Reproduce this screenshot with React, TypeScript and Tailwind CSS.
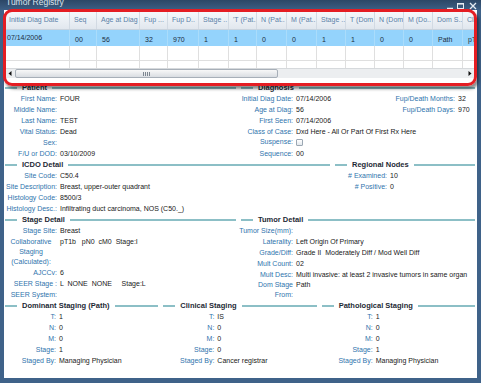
import React from "react";

type Kids = { children?: React.ReactNode };

function Label({ w = "w-[52px]", children }: { w?: string } & Kids) {
  return (
    <div className={`${w} shrink-0 flex justify-end whitespace-nowrap text-[#2f74ad]`}>
      {children}
    </div>
  );
}

function Row({ label, w = "w-[52px]", children }: { label: string; w?: string } & Kids) {
  return (
    <div className="flex h-[11px] leading-[11px]">
      <Label w={w}>{label}</Label>
      <div className="pl-[3px] whitespace-pre text-[#202020]">{children}</div>
    </div>
  );
}

function Head({ title, lead = "w-[12px]" }: { title: string; lead?: string }) {
  return (
    <div className="flex items-center h-[11px]">
      <div className={`${lead} h-[2px] bg-[#8cbfc6] shrink-0`} />
      <div className="px-[5px] font-bold text-[7.5px] leading-[11px] text-[#1d2935] whitespace-nowrap">
        {title}
      </div>
      <div className="flex-1 h-[2px] bg-[#8cbfc6]" />
    </div>
  );
}

const headers = [
  "Initial Diag Date",
  "Seq",
  "Age at Diag",
  "Fup ...",
  "Fup D..",
  "Stage ..",
  "'T (Pat..",
  "N (Pat..",
  "M (Pat..",
  "Stage ..",
  "T (Dom",
  "N (Dom",
  "M (Do..",
  "Dom S..",
  "Clin...",
];
const values = ["07/14/2006", "00", "56", "32", "970", "1", "1", "0", "0", "1", "1", "0", "0", "Path", "pT1b"];

const cols =
  "grid grid-cols-[65px_27px_43px_28px_31px_30px_28px_30px_30px_29px_29px_29px_29px_30px_40px] w-[498px]";

function Staging({ title, t, n, m, stage, by }: { title: string; t: string; n: string; m: string; stage: string; by: string }) {
  return (
    <div>
      <Head title={title} />
      <Row label="T:" w="w-[51px]">{t}</Row>
      <Row label="N:" w="w-[51px]">{n}</Row>
      <Row label="M:" w="w-[51px]">{m}</Row>
      <Row label="Stage:" w="w-[51px]">{stage}</Row>
      <Row label="Staged By:" w="w-[51px]">{by}</Row>
    </div>
  );
}

export default function App() {
  return (
    <div className="relative w-[481px] h-[383px] overflow-hidden bg-[#3f6289] font-['Liberation_Sans',Arial,sans-serif] text-[7px]">
      {/* title bar */}
      <div className="h-[10px] flex items-start justify-between pl-[6px] pr-[4px] overflow-hidden bg-gradient-to-b from-[#2c4766] to-[#3d5f85]">
        <span className="text-[8.5px] leading-[8.5px] -mt-[2px] text-[#dce5ee]">Tumor Registry</span>
        <svg width="32" height="10" viewBox="0 0 32 10" className="shrink-0">
          <path d="M2 8.5H8" stroke="#e6ecf2" strokeWidth="1.5" />
          <rect x="12.5" y="3.5" width="6" height="5" fill="none" stroke="#e6ecf2" strokeWidth="1" />
          <path d="M12.5 3.8H18.5" stroke="#e6ecf2" strokeWidth="1.6" />
          <path d="M25 3L31 9M31 3L25 9" stroke="#e6ecf2" strokeWidth="1.3" />
        </svg>
      </div>

      {/* client area */}
      <div className="mx-[4px] h-[368px] bg-white flex flex-col">
        {/* grid */}
        <div className="ml-[1px] w-[470px] pt-[2px] overflow-hidden">
          <div className={`${cols} h-[18px] bg-gradient-to-b from-[#f5f8fb] to-[#e1e7ee] border-b border-[#c9d3dd]`}>
            {headers.map((h, i) => (
              <div
                key={i}
                className="flex items-center pl-[4px] border-r border-[#d2dae3] text-[#5a80a7] whitespace-nowrap overflow-hidden"
              >
                {h}
              </div>
            ))}
          </div>
          <div className={`${cols} h-[16px] bg-[#94d3fc]`}>
            {values.map((v, i) => (
              <div
                key={i}
                className={
                  i === 0
                    ? "pl-[2px] pt-[2px] leading-[11px] border-r border-[#aadcfb] text-[#1b2c40] whitespace-nowrap overflow-hidden"
                    : "pl-[5px] pt-[4px] leading-[11px] border-r border-[#aadcfb] text-[#1b2c40] whitespace-nowrap overflow-hidden"
                }
              >
                {v}
              </div>
            ))}
          </div>
          <div className={`${cols} h-[15px]`}>
            {headers.map((_, i) => (
              <div key={i} className="border-r border-b border-[#dfdfdf]" />
            ))}
          </div>
          <div className={`${cols} h-[7px]`}>
            {headers.map((_, i) => (
              <div key={i} className="border-r border-[#dfdfdf]" />
            ))}
          </div>
          {/* horizontal scrollbar */}
          <div className="flex h-[10px] bg-[#eceef0] border-t border-[#d6d9dc]">
            <div className="w-[10px] flex items-center justify-center">
              <svg width="4" height="5" viewBox="0 0 4 5">
                <path d="M3.5 0L0.5 2.5L3.5 5Z" fill="#111" />
              </svg>
            </div>
            <div className="w-[263px] rounded-[2px] border border-[#a7afb8] bg-gradient-to-b from-[#f8f8f8] to-[#d9dde2] flex items-center justify-center gap-[1px]">
              <div className="w-[1px] h-[4px] bg-[#7d8690]" />
              <div className="w-[1px] h-[4px] bg-[#7d8690]" />
              <div className="w-[1px] h-[4px] bg-[#7d8690]" />
              <div className="w-[1px] h-[4px] bg-[#7d8690]" />
            </div>
            <div className="flex-1" />
            <div className="w-[10px] flex items-center justify-center">
              <svg width="4" height="5" viewBox="0 0 4 5">
                <path d="M0.5 0L3.5 2.5L0.5 5Z" fill="#111" />
              </svg>
            </div>
          </div>
        </div>

        {/* details */}
        <div className="ml-[1px] mr-[2px] mt-[4px] flex flex-col">
          <div className="grid grid-cols-[231px_1fr] gap-x-[5px]">
            <div>
              <Head title="Patient" />
              <Row label="First Name:">FOUR</Row>
              <Row label="Middle Name:" />
              <Row label="Last Name:">TEST</Row>
              <Row label="Vital Status:">Dead</Row>
              <Row label="Sex:" />
              <Row label="F/U or DOD:">03/10/2009</Row>
            </div>
            <div>
              <Head title="Diagnosis" />
              <div className="flex h-[11px] leading-[11px]">
                <Label>Initial Diag Date:</Label>
                <div className="pl-[3px] text-[#202020]">07/14/2006</div>
                <div className="flex-1" />
                <div className="text-[#2f74ad] whitespace-nowrap">Fup/Death Months:</div>
                <div className="w-[20px] pl-[3px] text-[#202020]">32</div>
              </div>
              <div className="flex h-[11px] leading-[11px]">
                <Label>Age at Diag:</Label>
                <div className="pl-[3px] text-[#202020]">56</div>
                <div className="flex-1" />
                <div className="text-[#2f74ad] whitespace-nowrap">Fup/Death Days:</div>
                <div className="w-[20px] pl-[3px] text-[#202020]">970</div>
              </div>
              <Row label="First Seen:">07/14/2006</Row>
              <Row label="Class of Case:">Dxd Here - All Or Part Of First Rx Here</Row>
              <div className="flex h-[11px] items-center">
                <Label>Suspense:</Label>
                <div className="ml-[3px] w-[7px] h-[7px] rounded-[1px] border border-[#9ba7b3] bg-gradient-to-b from-white to-[#e3e8ed]" />
              </div>
              <Row label="Sequence:">00</Row>
            </div>
          </div>

          <div className="grid grid-cols-[325px_1fr] gap-x-[5px]">
            <div>
              <Head title="ICDO Detail" />
              <Row label="Site Code:">C50.4</Row>
              <Row label="Site Description:">Breast, upper-outer quadrant</Row>
              <Row label="Histology Code:">8500/3</Row>
              <Row label="Histology Desc.:">Infiltrating duct carcinoma, NOS (C50._)</Row>
            </div>
            <div>
              <Head title="Regional Nodes" />
              <Row label="# Examined:">10</Row>
              <Row label="# Positive:">0</Row>
            </div>
          </div>

          <div className="grid grid-cols-[231px_1fr] gap-x-[5px]">
            <div>
              <Head title="Stage Detail" />
              <Row label="Stage Site:">Breast</Row>
              <div className="flex">
                <div className="w-[52px] shrink-0 text-center leading-[10px] text-[#2f74ad] pt-[0.5px]">
                  Collaborative
                  <br />
                  Staging
                  <br />
                  (Calculated):
                </div>
                <div className="pl-[3px] leading-[11px] whitespace-pre text-[#202020]">pT1b   pN0  cM0  Stage:I</div>
              </div>
              <Row label="AJCCv:">6</Row>
              <Row label="SEER Stage :">{"L  NONE  NONE     Stage:L"}</Row>
              <Row label="SEER System:" />
            </div>
            <div>
              <Head title="Tumor Detail" />
              <Row label="Tumor Size(mm):" />
              <Row label="Laterality:">Left Origin Of Primary</Row>
              <Row label="Grade/Diff:">{"Grade II  Moderately Diff / Mod Well Diff"}</Row>
              <Row label="Mult Count:">02</Row>
              <Row label="Mult Desc:">Multi invasive: at least 2 invasive tumors in same organ</Row>
              <div className="flex">
                <div className="w-[52px] shrink-0 text-right leading-[10px] text-[#2f74ad]">
                  Dom Stage
                  <br />
                  From:
                </div>
                <div className="pl-[3px] leading-[10px] text-[#202020]">Path</div>
              </div>
            </div>
          </div>

          <div className="grid grid-cols-3 gap-x-[5px]">
            <Staging title="Dominant Staging (Path)" t="1" n="0" m="0" stage="1" by="Managing Physician" />
            <Staging title="Clinical Staging" t="IS" n="0" m="0" stage="0" by="Cancer registrar" />
            <Staging title="Pathological Staging" t="1" n="0" m="0" stage="1" by="Managing Physician" />
          </div>
        </div>
      </div>

      {/* red annotation outline */}
      <div className="pointer-events-none absolute left-[3px] top-[9px] w-[474px] h-[77px] rounded-[9px] border-[3px] border-[#e41d23] shadow-[2px_3px_3px_rgba(0,0,0,0.45)]" />
    </div>
  );
}
